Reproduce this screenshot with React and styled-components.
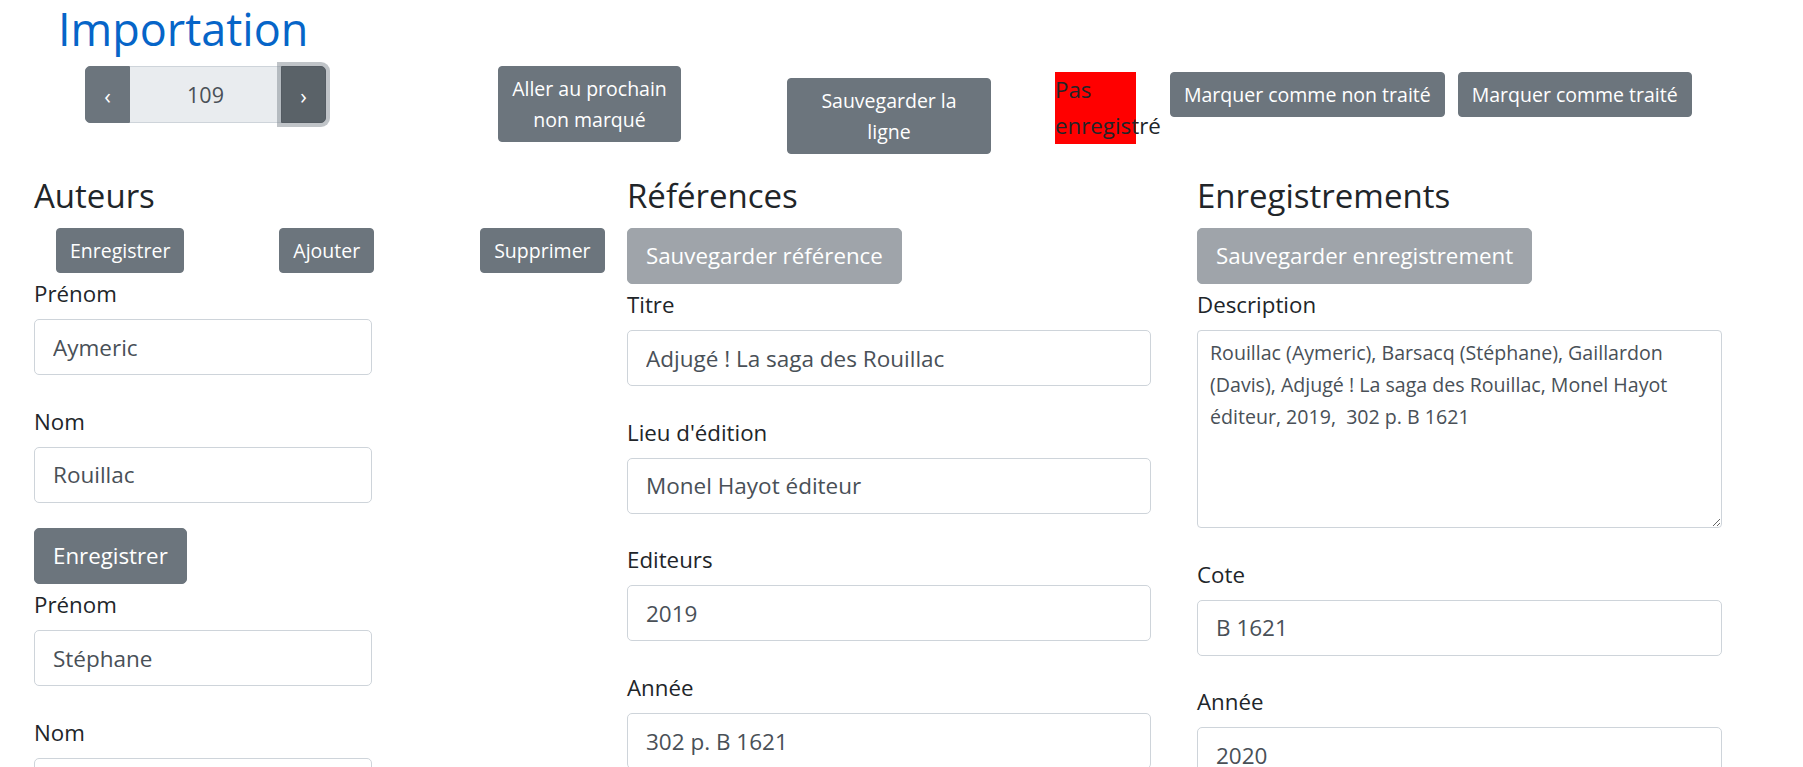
import React from "react";
import styled, { createGlobalStyle } from "styled-components";

const GlobalStyle = createGlobalStyle`
  * {
    box-sizing: border-box;
  }
  body {
    margin: 0;
    background: #fff;
    color: #212529;
    font-family: "Open Sans", "Noto Sans", sans-serif;
  }
`;

const App = () => {
  return (
    <>
      <GlobalStyle />
      <Page>
        <Title>Importation</Title>

        <TopBar>
          <Pager>
            <PagerButton $side="left">‹</PagerButton>
            <PagerInput readOnly defaultValue="109" />
            <PagerButton $side="right" $focused>
              ›
            </PagerButton>
          </Pager>
          <Button $ml={172} $w={183}>
            Aller au prochain non marqué
          </Button>
          <Button $ml={106} $mt={12} $w={204}>
            Sauvegarder la ligne
          </Button>
          <Status>Pas enregistré</Status>
          <Button $ml={34} $mt={6}>
            Marquer comme non traité
          </Button>
          <Button $ml={13} $mt={6}>
            Marquer comme traité
          </Button>
        </TopBar>

        <Columns>
          <Column>
            <Heading>Auteurs</Heading>
            <ButtonRow>
              <Button>Enregistrer</Button>
              <Button $ml={95}>Ajouter</Button>
              <Button $ml={106}>Supprimer</Button>
            </ButtonRow>
            <FieldGroup $w={338}>
              <Label>Prénom</Label>
              <Input defaultValue="Aymeric" />
            </FieldGroup>
            <FieldGroup $w={338}>
              <Label>Nom</Label>
              <Input defaultValue="Rouillac" />
            </FieldGroup>
            <LargeButton>Enregistrer</LargeButton>
            <FieldGroup $w={338}>
              <Label>Prénom</Label>
              <Input defaultValue="Stéphane" />
            </FieldGroup>
            <FieldGroup $w={338}>
              <Label>Nom</Label>
              <Input defaultValue="Barsacq" />
            </FieldGroup>
          </Column>

          <Column>
            <Heading>Références</Heading>
            <LargeButton disabled>Sauvegarder référence</LargeButton>
            <FieldGroup>
              <Label>Titre</Label>
              <Input defaultValue="Adjugé ! La saga des Rouillac" />
            </FieldGroup>
            <FieldGroup>
              <Label>Lieu d'édition</Label>
              <Input defaultValue="Monel Hayot éditeur" />
            </FieldGroup>
            <FieldGroup>
              <Label>Editeurs</Label>
              <Input defaultValue="2019" />
            </FieldGroup>
            <FieldGroup>
              <Label>Année</Label>
              <Input defaultValue="302 p. B 1621" />
            </FieldGroup>
          </Column>

          <Column>
            <Heading>Enregistrements</Heading>
            <LargeButton disabled>Sauvegarder enregistrement</LargeButton>
            <FieldGroup>
              <Label>Description</Label>
              <TextArea defaultValue="Rouillac (Aymeric), Barsacq (Stéphane), Gaillardon (Davis), Adjugé ! La saga des Rouillac, Monel Hayot éditeur, 2019,  302 p. B 1621" />
            </FieldGroup>
            <FieldGroup>
              <Label>Cote</Label>
              <Input defaultValue="B 1621" />
            </FieldGroup>
            <FieldGroup>
              <Label>Année</Label>
              <Input defaultValue="2020" />
            </FieldGroup>
          </Column>
        </Columns>
      </Page>
    </>
  );
};

const Page = styled.div`
  width: 100%;
`;

const Title = styled.h1`
  margin: 0 0 10px 58px;
  padding-top: 2px;
  font-size: 45px;
  line-height: 54px;
  font-weight: 400;
  color: #0665c8;
`;

const TopBar = styled.div`
  display: flex;
  align-items: flex-start;
  padding-left: 85px;
`;

const Pager = styled.div`
  display: flex;
  flex-shrink: 0;
  height: 57px;
`;

const PagerButton = styled.button`
  width: 45px;
  height: 100%;
  padding: 0;
  font-family: inherit;
  font-size: 22px;
  color: #fff;
  background: ${(p) => (p.$focused ? "#5a6268" : "#6c757d")};
  border: 1px solid ${(p) => (p.$focused ? "#545b62" : "#6c757d")};
  border-radius: ${(p) => (p.$side === "left" ? "5px 0 0 5px" : "0 5px 5px 0")};
  box-shadow: ${(p) =>
    p.$focused ? "0 0 0 4px rgba(130, 138, 145, 0.5)" : "none"};
  position: relative;
  z-index: ${(p) => (p.$focused ? 1 : 0)};
`;

const PagerInput = styled.input`
  width: 151px;
  height: 100%;
  padding: 0 12px;
  font-family: inherit;
  font-size: 21.5px;
  text-align: center;
  color: #495057;
  background: #e9ecef;
  border: 1px solid #ced4da;
  border-left: none;
  border-right: none;
  outline: none;
`;

const Button = styled.button`
  flex-shrink: 0;
  width: ${(p) => (p.$w ? `${p.$w}px` : "auto")};
  margin-left: ${(p) => p.$ml || 0}px;
  margin-top: ${(p) => p.$mt || 0}px;
  padding: 6px 13px;
  font-family: inherit;
  font-size: 19.5px;
  line-height: 31px;
  color: #fff;
  text-align: center;
  background: #6c757d;
  border: 1px solid #6c757d;
  border-radius: 4px;
  cursor: pointer;
`;

const LargeButton = styled(Button)`
  display: block;
  padding: 10px 18px;
  font-size: 22.3px;
  line-height: 34px;
  border-radius: 5px;

  &:disabled {
    opacity: 0.65;
    cursor: default;
  }
`;

const Status = styled.div`
  flex-shrink: 0;
  width: 81px;
  height: 72px;
  margin: 6px 0 0 64px;
  font-size: 22.3px;
  line-height: 36px;
  background: #ff0000;
  color: #212529;
`;

const Columns = styled.div`
  display: grid;
  grid-template-columns: 547px 524px 525px;
  column-gap: 46px;
  margin: 22px 0 0 34px;
`;

const Column = styled.div`
  min-width: 0;
`;

const Heading = styled.h3`
  margin: 0 0 12px;
  font-size: 33px;
  line-height: 40px;
  font-weight: 400;
`;

const ButtonRow = styled.div`
  display: flex;
  margin-left: 22px;
`;

const FieldGroup = styled.div`
  width: ${(p) => (p.$w ? `${p.$w}px` : "100%")};
  margin-bottom: 25.7px;
`;

const Label = styled.label`
  display: block;
  margin-bottom: 5px;
  font-size: 22.3px;
  line-height: 41px;
`;

const Input = styled.input`
  display: block;
  width: 100%;
  height: 56px;
  padding: 10px 18px;
  font-family: inherit;
  font-size: 22.5px;
  line-height: 34px;
  color: #495057;
  background: #fff;
  border: 1px solid #ced4da;
  border-radius: 5px;
  outline: none;
`;

const TextArea = styled.textarea`
  display: block;
  width: 100%;
  height: 198px;
  padding: 6px 12px;
  font-family: inherit;
  font-size: 19.6px;
  line-height: 32px;
  color: #495057;
  background: #fff;
  border: 1px solid #ced4da;
  border-radius: 4px;
  outline: none;
`;

export default App;
